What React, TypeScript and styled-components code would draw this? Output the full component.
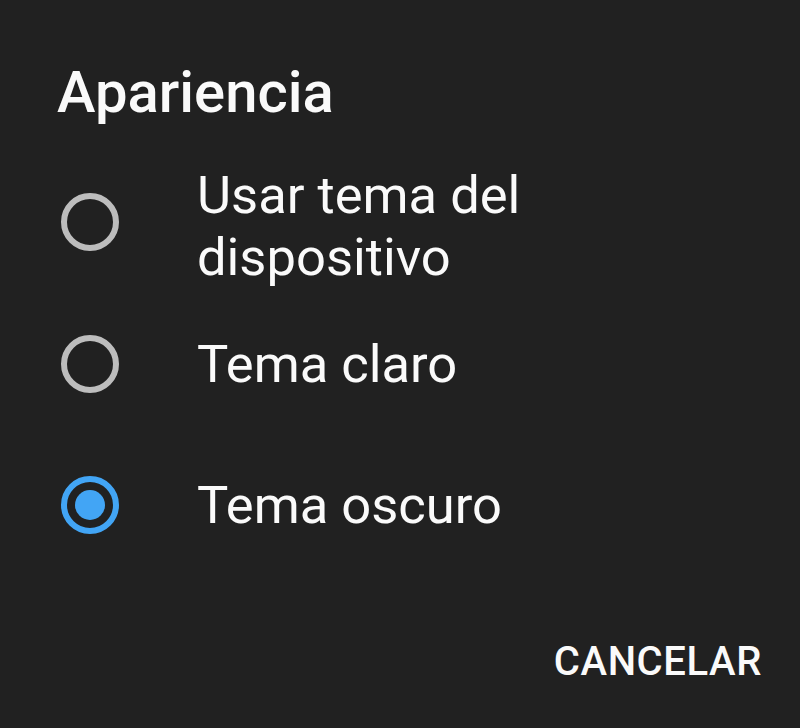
import React, { useState } from "react"
import styled, { createGlobalStyle } from "styled-components"

const GlobalStyle = createGlobalStyle`
    html, body {
        margin: 0;
        padding: 0;
        background: #212121;
    }
    body {
        font-family: Roboto, "Noto Sans", sans-serif;
        -webkit-font-smoothing: antialiased;
    }
`

const Dialog = styled.div`
    width: 800px;
    height: 728px;
    box-sizing: border-box;
    background: #212121;
    color: #fafafa;
    padding: 58px 38px 0 57px;
    display: flex;
    flex-direction: column;
`

const Title = styled.h1`
    margin: 0;
    font-size: 58px;
    font-weight: 500;
    line-height: 68px;
    letter-spacing: 0;
`

const Options = styled.div`
    display: flex;
    flex-direction: column;
    margin-top: 24px;
`

const Row = styled.label`
    display: flex;
    align-items: center;
    gap: 78px;
    height: 141px;
    cursor: pointer;

    &:first-child {
        height: 143px;
    }
`

const Radio = styled.span<{ $checked: boolean }>`
    flex: none;
    width: 58px;
    height: 58px;
    margin-left: 4px;
    box-sizing: border-box;
    border-radius: 50%;
    border: 6px solid ${(p) => (p.$checked ? "#42a5f5" : "#bdbdbd")};
    display: flex;
    align-items: center;
    justify-content: center;

    &::after {
        content: "";
        width: 30px;
        height: 30px;
        border-radius: 50%;
        background: #42a5f5;
        display: ${(p) => (p.$checked ? "block" : "none")};
    }
`

const Label = styled.span<{ $multiline?: boolean }>`
    font-size: 52.5px;
    line-height: 62px;
    font-weight: 400;
    padding-top: ${(p) => (p.$multiline ? "9px" : "0")};
`

const Actions = styled.div`
    display: flex;
    justify-content: flex-end;
    margin-top: 63px;
`

const TextButton = styled.button`
    background: none;
    border: none;
    padding: 0;
    color: #fafafa;
    font-family: inherit;
    font-size: 40px;
    font-weight: 500;
    letter-spacing: 0.6px;
    text-transform: uppercase;
    cursor: pointer;
`

const options = [["Usar tema del", "dispositivo"], ["Tema claro"], ["Tema oscuro"]]

export default function App() {
    const [selected, setSelected] = useState(2)

    return (
        <>
            <GlobalStyle />
            <Dialog>
                <Title>Apariencia</Title>
                <Options>
                    {options.map((lines, i) => (
                        <Row key={lines.join(" ")} onClick={() => setSelected(i)}>
                            <Radio $checked={selected === i} />
                            <Label $multiline={lines.length > 1}>
                                {lines.map((line, j) => (
                                    <React.Fragment key={line}>
                                        {j > 0 && <br />}
                                        {line}
                                    </React.Fragment>
                                ))}
                            </Label>
                        </Row>
                    ))}
                </Options>
                <Actions>
                    <TextButton>Cancelar</TextButton>
                </Actions>
            </Dialog>
        </>
    )
}
